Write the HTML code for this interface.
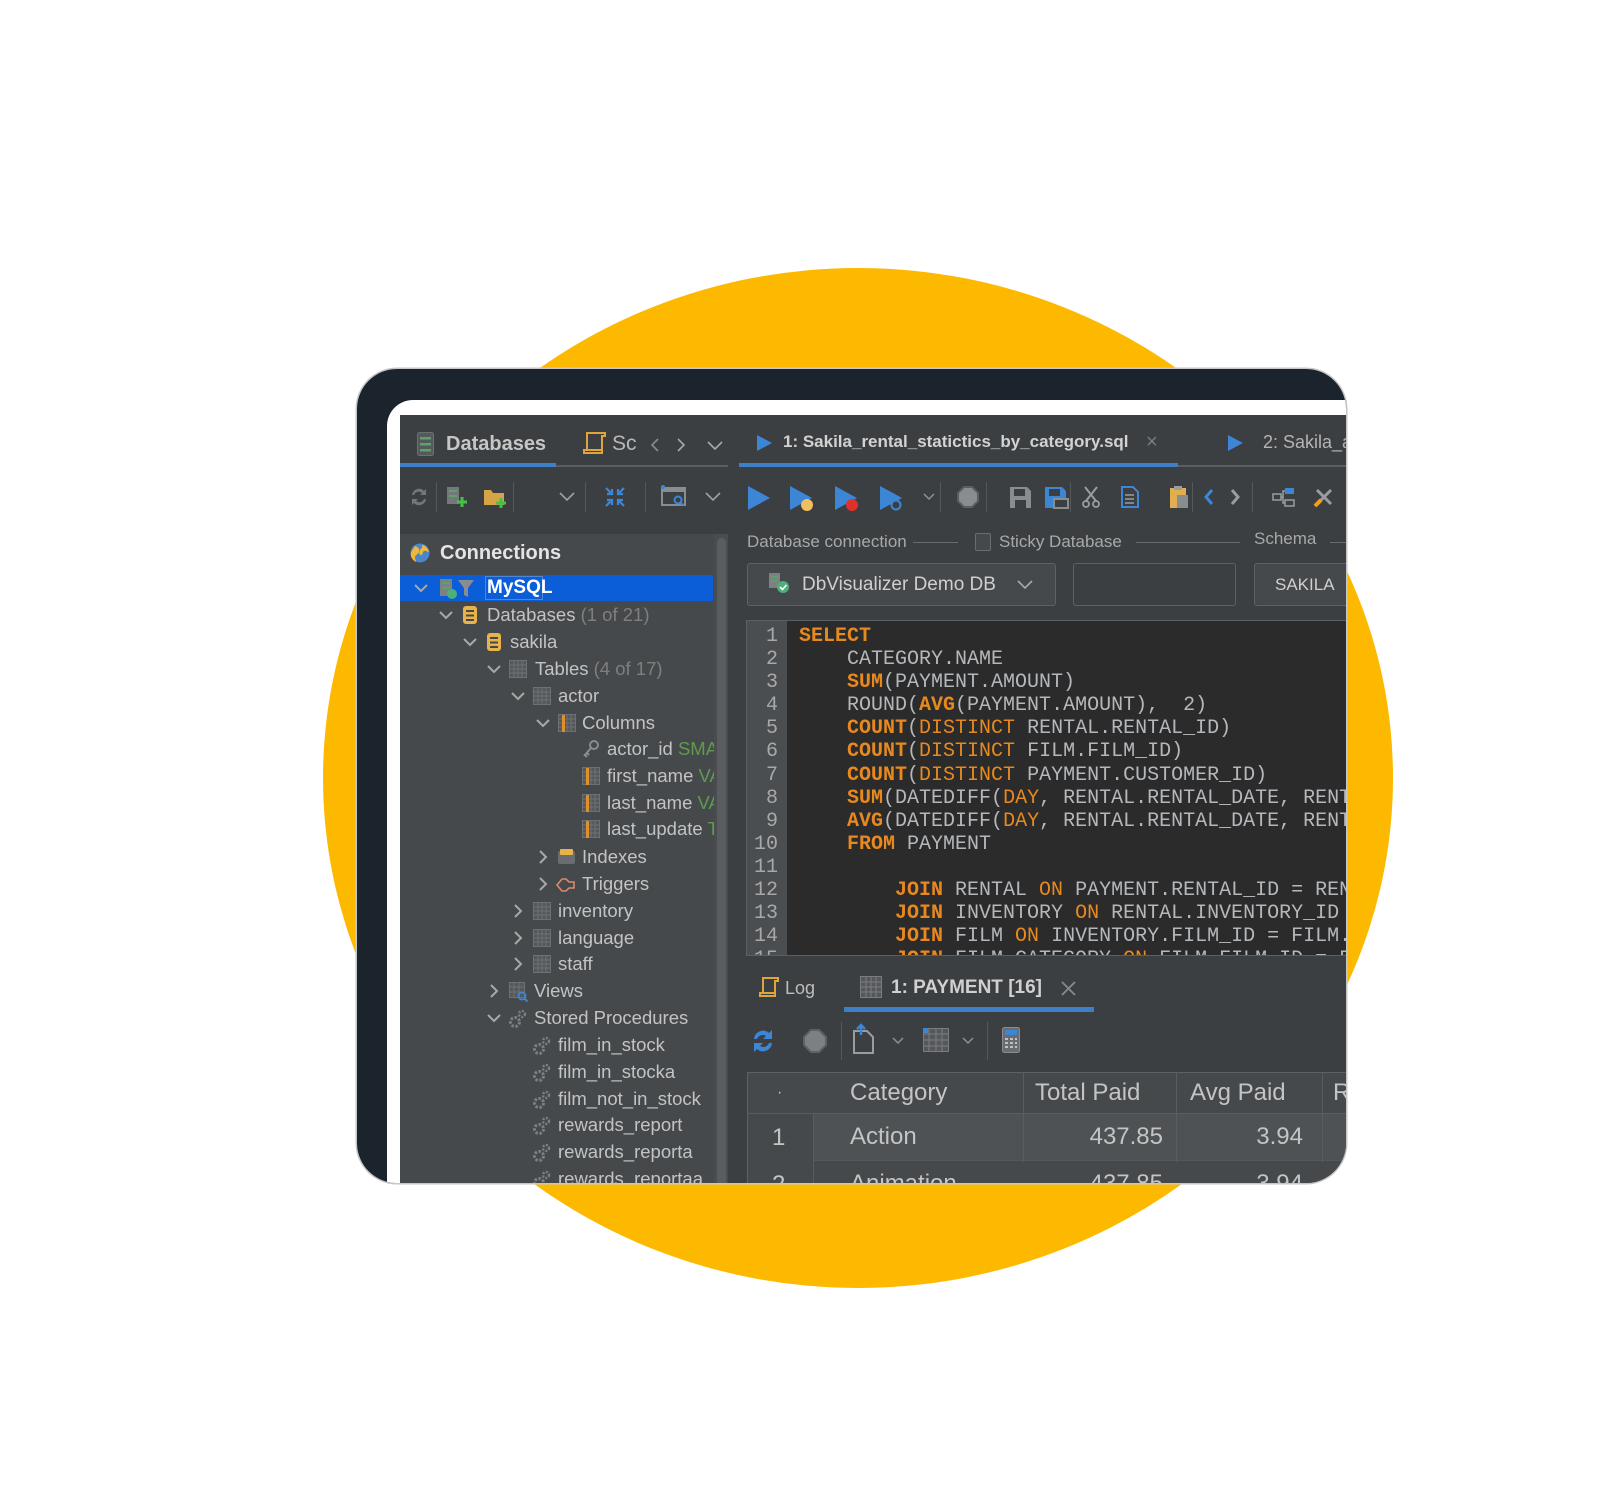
<!DOCTYPE html>
<html><head><meta charset="utf-8">
<style>
*{margin:0;padding:0;box-sizing:border-box}
html,body{width:1600px;height:1497px;background:#fff;overflow:hidden;font-family:"Liberation Sans",sans-serif}
.abs{position:absolute}
#circle{position:absolute;left:323px;top:268px;width:1070px;height:1020px;border-radius:50%;background:#FDB900}
#dev{position:absolute;left:357px;top:369px;width:989px;height:814px;border-radius:40px;overflow:hidden;background:#1b232d;box-shadow:0 0 0 1.5px #c6c6c6}
#inner{position:absolute;left:-357px;top:-369px;width:1600px;height:1497px}
.t{position:absolute;white-space:nowrap;color:#c3c3c3;font-size:18.5px;line-height:26px;height:26px}
.g{color:#7f7f7f}
.gr{color:#5f9a4f}
.code{position:absolute;left:799px;top:625px;font-family:"Liberation Mono",monospace;font-size:20px;line-height:23.1px;color:#b4b8bc;white-space:pre}
.k{color:#e8891f;font-weight:bold}
.o{color:#e8891f}
.ln{position:absolute;left:0;width:31px;top:4px;font-family:"Liberation Mono",monospace;font-size:20px;line-height:23.1px;color:#a8a8a8;text-align:right;white-space:pre}
svg{position:absolute;overflow:visible}
.th{position:absolute;font-size:24px;color:#c4c4c4;line-height:41px;white-space:nowrap}
.td{position:absolute;font-size:24px;color:#c4c4c4;line-height:47px;white-space:nowrap}
</style></head><body>
<div id="circle"></div>
<div id="dev"><div id="inner">
<div class="abs" style="left:387px;top:400px;width:1000px;height:900px;border-radius:26px;background:#fff"></div>
<div class="abs" style="left:400px;top:415px;width:1000px;height:800px;background:#3c3f41"></div>

<!-- left tabs -->
<svg style="left:417px;top:432px" width="17" height="24"><rect x="0.5" y="0.5" width="16" height="23" rx="2" fill="#55595b" stroke="#6c7072"/><rect x="3" y="5" width="11" height="2.5" fill="#5aa36a"/><rect x="3" y="11" width="11" height="2.5" fill="#5aa36a"/><rect x="3" y="17" width="11" height="2.5" fill="#5aa36a"/></svg>
<div class="t" style="left:446px;top:431px;font-size:20px;font-weight:bold;color:#c6c6c6">Databases</div>
<svg style="left:581px;top:431px" width="26" height="25"><path d="M6 2h18v3h-3v17H3v-3h3z M3 19h18" fill="none" stroke="#e0a53a" stroke-width="2"/></svg>
<div class="t" style="left:612px;top:431px;font-size:21px;color:#b8b8b8">Sc</div>
<svg style="left:650px;top:438px" width="10" height="14"><path d="M8 1L2 7l6 6" fill="none" stroke="#8a8a8a" stroke-width="1.6"/></svg>
<svg style="left:676px;top:438px" width="10" height="14"><path d="M2 1l6 6-6 6" fill="none" stroke="#a8a8a8" stroke-width="1.6"/></svg>
<svg style="left:707px;top:441px" width="16" height="10"><path d="M1 1l7 7 7-7" fill="none" stroke="#a8a8a8" stroke-width="1.6"/></svg>
<div class="abs" style="left:400px;top:463px;width:156px;height:4px;background:#3f7fc8"></div>
<div class="abs" style="left:556px;top:465px;width:172px;height:1.5px;background:#5b5e60"></div>

<!-- right tabs -->
<svg style="left:757px;top:435px" width="15" height="16"><path d="M0 0l15 8-15 8z" fill="#3d86d6"/></svg>
<div class="t" style="left:783px;top:429px;font-size:17px;font-weight:bold;color:#d2d2d2">1: Sakila_rental_statictics_by_category.sql</div>
<div class="t" style="left:1146px;top:429px;font-size:20px;color:#7c7c7c">×</div>
<svg style="left:1228px;top:435px" width="15" height="16"><path d="M0 0l15 8-15 8z" fill="#3d86d6"/></svg>
<div class="t" style="left:1263px;top:429px;font-size:18px;color:#b4b4b4">2: Sakila_actor</div>
<div class="abs" style="left:739px;top:463px;width:439px;height:4px;background:#3f7fc8"></div>
<div class="abs" style="left:1178px;top:465px;width:170px;height:1.5px;background:#5b5e60"></div>

<!-- left toolbar -->
<svg style="left:408px;top:486px" width="22" height="22"><path d="M4 9a7 7 0 0 1 12-4l2-2v6h-6l2-2a5 5 0 0 0-8 2z M18 13a7 7 0 0 1-12 4l-2 2v-6h6l-2 2a5 5 0 0 0 8-2z" fill="#74777a"/></svg>
<div class="abs" style="left:436px;top:482px;width:1px;height:30px;background:#55585a"></div>
<svg style="left:446px;top:486px" width="22" height="22"><rect x="1" y="1" width="12" height="17" fill="#74787a"/><rect x="3" y="4" width="8" height="2" fill="#5aa36a"/><rect x="3" y="9" width="8" height="2" fill="#5aa36a"/><path d="M16 11v10M11 16h10" stroke="#46c04a" stroke-width="3"/></svg>
<svg style="left:483px;top:487px" width="24" height="22"><path d="M1 3h7l2 3h11v12H1z" fill="#d6a444"/><path d="M18 11v10M13 16h10" stroke="#46c04a" stroke-width="3"/></svg>
<div class="abs" style="left:513px;top:482px;width:1px;height:30px;background:#55585a"></div>
<svg style="left:559px;top:492px" width="16" height="10"><path d="M1 1l7 7 7-7" fill="none" stroke="#a0a0a0" stroke-width="1.6"/></svg>
<div class="abs" style="left:585px;top:482px;width:1px;height:30px;background:#55585a"></div>
<svg style="left:604px;top:486px" width="22" height="22"><path d="M2 2l6 6M8 3v5H3 M20 2l-6 6M14 3v5h5 M2 20l6-6M8 19v-5H3 M20 20l-6-6M14 19v-5h5" fill="none" stroke="#3d86d6" stroke-width="2.2"/></svg>
<div class="abs" style="left:645px;top:482px;width:1px;height:30px;background:#55585a"></div>
<svg style="left:661px;top:485px" width="26" height="24"><rect x="1" y="3" width="23" height="17" fill="none" stroke="#8a8d90" stroke-width="2"/><rect x="1" y="3" width="23" height="4" fill="#8a8d90"/><circle cx="2" cy="2" r="2" fill="#3d86d6"/><circle cx="17" cy="15" r="3.5" fill="none" stroke="#3d86d6" stroke-width="2"/><path d="M19.5 17.5l3 3" stroke="#3d86d6" stroke-width="2"/></svg>
<svg style="left:705px;top:492px" width="16" height="10"><path d="M1 1l7 7 7-7" fill="none" stroke="#a0a0a0" stroke-width="1.6"/></svg>

<!-- right toolbar -->
<svg style="left:748px;top:486px" width="22" height="24"><path d="M0 0l22 12L0 24z" fill="#3d86d6"/></svg>
<svg style="left:790px;top:486px" width="24" height="26"><path d="M0 0l22 12L0 24z" fill="#3d86d6"/><circle cx="17" cy="19" r="6" fill="#f0c060"/></svg>
<svg style="left:835px;top:486px" width="24" height="26"><path d="M0 0l22 12L0 24z" fill="#3d86d6"/><circle cx="17" cy="19" r="6" fill="#e0302a"/></svg>
<svg style="left:880px;top:486px" width="24" height="26"><path d="M0 0l22 12L0 24z" fill="#3d86d6"/><circle cx="16" cy="19" r="4.5" fill="#3c3f41" stroke="#3d86d6" stroke-width="2"/></svg>
<svg style="left:923px;top:493px" width="12" height="8"><path d="M1 1l5 5 5-5" fill="none" stroke="#909090" stroke-width="1.5"/></svg>
<div class="abs" style="left:940px;top:482px;width:1px;height:30px;background:#55585a"></div>
<svg style="left:957px;top:486px" width="22" height="22"><path d="M7 1h8l6 6v8l-6 6H7l-6-6V7z" fill="#8a8d90" stroke="#5c5f61" stroke-width="2"/></svg>
<div class="abs" style="left:986px;top:482px;width:1px;height:30px;background:#55585a"></div>
<svg style="left:1010px;top:487px" width="21" height="21"><path d="M0 0h17l4 4v17H0z" fill="#8a8d90"/><rect x="4" y="2" width="11" height="7" fill="#3c3f41"/><rect x="5" y="13" width="11" height="8" fill="#3c3f41"/></svg>
<svg style="left:1045px;top:487px" width="24" height="22"><path d="M0 0h17l4 4v17H0z" fill="#3d86d6"/><rect x="4" y="2" width="11" height="7" fill="#3c3f41"/><rect x="9" y="12" width="14" height="9" fill="#3c3f41" stroke="#8a8d90" stroke-width="2"/></svg>
<div class="abs" style="left:1070px;top:482px;width:1px;height:30px;background:#55585a"></div>
<svg style="left:1082px;top:486px" width="18" height="22"><path d="M3 1l11 14M15 1L4 15" stroke="#9a9da0" stroke-width="2"/><circle cx="4" cy="18" r="3" fill="none" stroke="#9a9da0" stroke-width="1.8"/><circle cx="14" cy="18" r="3" fill="none" stroke="#9a9da0" stroke-width="1.8"/></svg>
<svg style="left:1121px;top:486px" width="20" height="22"><path d="M1 1h11l5 5v15H1z" fill="none" stroke="#3d86d6" stroke-width="2"/><path d="M4 9h9M4 13h9M4 17h9" stroke="#9a9da0" stroke-width="1.5"/></svg>
<svg style="left:1169px;top:485px" width="20" height="24"><rect x="1" y="3" width="16" height="20" fill="#e0b050"/><rect x="5" y="1" width="8" height="4" fill="#9a9da0"/><rect x="8" y="10" width="11" height="13" fill="#8a8d90"/></svg>
<div class="abs" style="left:1192px;top:482px;width:1px;height:30px;background:#55585a"></div>
<svg style="left:1204px;top:489px" width="10" height="16"><path d="M8 1L2 8l6 7" fill="none" stroke="#3d86d6" stroke-width="3"/></svg>
<svg style="left:1230px;top:489px" width="10" height="16"><path d="M2 1l6 7-6 7" fill="none" stroke="#9a9da0" stroke-width="3"/></svg>
<div class="abs" style="left:1252px;top:482px;width:1px;height:30px;background:#55585a"></div>
<svg style="left:1272px;top:487px" width="24" height="20"><rect x="1" y="7" width="8" height="6" fill="none" stroke="#9a9da0" stroke-width="1.5"/><rect x="13" y="1" width="9" height="6" fill="#3d86d6"/><rect x="13" y="13" width="9" height="6" fill="none" stroke="#9a9da0" stroke-width="1.5"/><path d="M9 10h2v-6h2M11 10v6h2" fill="none" stroke="#9a9da0" stroke-width="1.5"/></svg>
<svg style="left:1312px;top:485px" width="24" height="24"><path d="M3 21L19 5M5 5l14 14" stroke="#9a9da0" stroke-width="3"/><path d="M3 21l6-6" stroke="#f0a020" stroke-width="4"/></svg>

<!-- tree panel -->
<div class="abs" style="left:400px;top:534px;width:314px;height:700px;background:#46494b"></div>
<div class="abs" style="left:714px;top:534px;width:14px;height:700px;background:#4a4d4f"></div>
<div class="abs" style="left:717px;top:538px;width:9px;height:700px;border-radius:5px;background:#5a5d60"></div>

<svg style="left:410px;top:543px" width="20" height="20"><circle cx="10" cy="10" r="9.5" fill="#4a86c8"/><path d="M5 3c3 1 5 3 4 6s-4 2-4 6l1 4c-4-2-6-6-5-10zM12 2c3 0 6 3 7 7-2 0-3-2-5-1s-1 4-3 4-2-3-1-5 3-2 2-5z" fill="#f0b83a"/></svg>
<div class="t" style="left:440px;top:540px;font-size:20px;font-weight:bold;color:#e4e4e4">Connections</div>

<div class="abs" style="left:400px;top:575px;width:313px;height:26px;background:#0b5ed7"></div>
<div class="abs" style="left:485px;top:576px;width:58px;height:24px;border:1px solid #4f86d8"></div>

<div id="tree"></div>

<!-- right panel header -->
<div class="t" style="left:747px;top:529px;font-size:17px;color:#a8a8a8">Database connection</div>
<div class="abs" style="left:913px;top:542px;width:45px;height:1px;background:#686b6d"></div>
<div class="abs" style="left:975px;top:533px;width:16px;height:18px;border:1px solid #6a6d6f;border-radius:2px;background:#46494b"></div>
<div class="t" style="left:999px;top:529px;font-size:17px;color:#a8a8a8">Sticky Database</div>
<div class="abs" style="left:1136px;top:542px;width:104px;height:1px;background:#686b6d"></div>
<div class="t" style="left:1254px;top:526px;font-size:17px;color:#a8a8a8">Schema</div>
<div class="abs" style="left:1330px;top:542px;width:20px;height:1px;background:#686b6d"></div>

<div class="abs" style="left:747px;top:563px;width:309px;height:43px;border:1px solid #5e6163;border-radius:3px;background:#46494b"></div>
<svg style="left:769px;top:573px" width="22" height="22"><rect x="0" y="0" width="11" height="15" fill="#7d8184"/><rect x="2" y="3" width="7" height="1.5" fill="#5aa36a"/><rect x="2" y="7" width="7" height="1.5" fill="#5aa36a"/><circle cx="14" cy="14" r="6" fill="#4bb07a"/><path d="M11 14l2.5 2.5 4-4.5" fill="none" stroke="#fff" stroke-width="1.6"/></svg>
<div class="t" style="left:802px;top:572px;font-size:19px;color:#cfcfcf">DbVisualizer Demo DB</div>
<svg style="left:1017px;top:580px" width="16" height="10"><path d="M1 1l7 7 7-7" fill="none" stroke="#a8a8a8" stroke-width="1.6"/></svg>
<div class="abs" style="left:1073px;top:563px;width:163px;height:43px;border:1px solid #5e6163;border-radius:3px;background:#3c3f41"></div>
<div class="abs" style="left:1254px;top:563px;width:120px;height:43px;border:1px solid #5e6163;border-radius:3px;background:#46494b"></div>
<div class="t" style="left:1275px;top:572px;font-size:17px;color:#cfcfcf">SAKILA</div>

<!-- editor -->
<div class="abs" style="left:746px;top:620px;width:620px;height:336px;background:#2b2b2b;border:1px solid #5c5f61"></div>
<div class="abs" style="left:747px;top:621px;width:40px;height:334px;background:#4b4e50"></div>
<div class="abs" style="left:747px;top:621px;width:620px;height:334px;overflow:hidden">
<div class="ln">1
2
3
4
5
6
7
8
9
10
11
12
13
14
15</div>
<div class="code" style="left:52px;top:4px"><span class="k">SELECT</span>
    CATEGORY.NAME
    <span class="k">SUM</span>(PAYMENT.AMOUNT)
    ROUND(<span class="k">AVG</span>(PAYMENT.AMOUNT),  2)
    <span class="k">COUNT</span>(<span class="o">DISTINCT</span> RENTAL.RENTAL_ID)
    <span class="k">COUNT</span>(<span class="o">DISTINCT</span> FILM.FILM_ID)
    <span class="k">COUNT</span>(<span class="o">DISTINCT</span> PAYMENT.CUSTOMER_ID)
    <span class="k">SUM</span>(DATEDIFF(<span class="o">DAY</span>, RENTAL.RENTAL_DATE, RENTAL.RETURN_DATE))
    <span class="k">AVG</span>(DATEDIFF(<span class="o">DAY</span>, RENTAL.RENTAL_DATE, RENTAL.RETURN_DATE))
    <span class="k">FROM</span> PAYMENT

        <span class="k">JOIN</span> RENTAL <span class="o">ON</span> PAYMENT.RENTAL_ID = RENTAL.RENTAL_ID
        <span class="k">JOIN</span> INVENTORY <span class="o">ON</span> RENTAL.INVENTORY_ID = INVENTORY.INVENTORY_ID
        <span class="k">JOIN</span> FILM <span class="o">ON</span> INVENTORY.FILM_ID = FILM.FILM_ID
        <span class="k">JOIN</span> FILM_CATEGORY <span class="o">ON</span> FILM.FILM_ID = FILM_CATEGORY.FILM_ID</div>
</div>

<!-- bottom tabs -->
<svg style="left:758px;top:976px" width="22" height="24"><path d="M5 2h15v3h-3v15H2v-3h3z M2 17h15" fill="none" stroke="#e0a53a" stroke-width="2"/></svg>
<div class="t" style="left:785px;top:975px;font-size:18px;color:#bdbdbd">Log</div>
<svg style="left:860px;top:976px" width="22" height="22"><rect x="0.5" y="0.5" width="21" height="21" fill="#55585a" stroke="#7a7d80"/><path d="M0 6h22M0 11h22M0 16h22M6 0v22M11 0v22M16 0v22" stroke="#7a7d80" stroke-width="1"/></svg>
<div class="t" style="left:891px;top:975px;font-size:19px;font-weight:bold;color:#d0d0d0">1: PAYMENT [16]</div>
<svg style="left:1061px;top:981px" width="15" height="15"><path d="M1 1l13 13M14 1L1 14" stroke="#8a8a8a" stroke-width="1.8"/></svg>
<div class="abs" style="left:844px;top:1007px;width:250px;height:5px;background:#3f7fc8"></div>

<svg style="left:749px;top:1027px" width="28" height="28"><path d="M5 12a9 9 0 0 1 15-6l3-3v9h-9l3-3a6 6 0 0 0-9 3z M23 16a9 9 0 0 1-15 6l-3 3v-9h9l-3 3a6 6 0 0 0 9-3z" fill="#3d86d6"/></svg>
<svg style="left:803px;top:1029px" width="24" height="24"><path d="M8 1h8l7 7v8l-7 7H8l-7-7V8z" fill="#7d8083" stroke="#5f6264" stroke-width="2"/></svg>
<div class="abs" style="left:841px;top:1022px;width:1px;height:38px;background:#55585a"></div>
<svg style="left:853px;top:1024px" width="22" height="30"><path d="M1 7h13l6 6v16H1z" fill="none" stroke="#9a9da0" stroke-width="2"/><path d="M8 11V1M4 5l4-4 4 4" fill="none" stroke="#3d86d6" stroke-width="2.5"/></svg>
<svg style="left:892px;top:1037px" width="12" height="8"><path d="M1 1l5 5 5-5" fill="none" stroke="#909090" stroke-width="1.5"/></svg>
<svg style="left:923px;top:1028px" width="26" height="24"><rect x="0.5" y="0.5" width="25" height="23" fill="#55585a" stroke="#7a7d80"/><path d="M0 6h26M0 12h26M0 18h26M6 0v24M13 0v24M19 0v24" stroke="#7a7d80"/><rect x="0" y="0" width="5" height="5" fill="#3d86d6"/></svg>
<svg style="left:962px;top:1037px" width="12" height="8"><path d="M1 1l5 5 5-5" fill="none" stroke="#909090" stroke-width="1.5"/></svg>
<div class="abs" style="left:987px;top:1022px;width:1px;height:38px;background:#55585a"></div>
<svg style="left:1002px;top:1027px" width="18" height="26"><rect x="0.5" y="0.5" width="17" height="25" rx="2" fill="#6a6d70" stroke="#8a8d90"/><rect x="3" y="3" width="12" height="5" fill="#3d86d6"/><path d="M3 12h3M8 12h3M13 12h2M3 16h3M8 16h3M13 16h2M3 20h3M8 20h3M13 20h2" stroke="#c0c0c0" stroke-width="2"/></svg>

<!-- table -->
<div class="abs" style="left:747px;top:1072px;width:620px;height:120px;background:#46494b;border-top:1px solid #5e6163;border-left:1px solid #5e6163"></div>
<div class="abs" style="left:813px;top:1113px;width:560px;height:47px;background:#4e5254"></div>
<div class="abs" style="left:747px;top:1113px;width:620px;height:1px;background:#5a5d60"></div>
<div class="abs" style="left:813px;top:1160px;width:560px;height:1px;background:#55585a"></div>
<div class="abs" style="left:813px;top:1113px;width:1px;height:80px;background:#5a5d60"></div>
<div class="abs" style="left:1023px;top:1072px;width:1px;height:90px;background:#5a5d60"></div>
<div class="abs" style="left:1176px;top:1072px;width:1px;height:90px;background:#5a5d60"></div>
<div class="abs" style="left:1322px;top:1072px;width:1px;height:90px;background:#5a5d60"></div>
<div class="th" style="left:777px;top:1072px;font-size:16px">·</div>
<div class="th" style="left:850px;top:1072px">Category</div>
<div class="th" style="left:1035px;top:1072px">Total Paid</div>
<div class="th" style="left:1190px;top:1072px">Avg Paid</div>
<div class="th" style="left:1333px;top:1072px">R</div>
<div class="td" style="left:772px;top:1114px">1</div>
<div class="td" style="left:850px;top:1113px">Action</div>
<div class="td" style="left:1023px;top:1113px;width:140px;text-align:right">437.85</div>
<div class="td" style="left:1176px;top:1113px;width:127px;text-align:right">3.94</div>
<div class="td" style="left:772px;top:1161px">2</div>
<div class="td" style="left:850px;top:1160px">Animation</div>
<div class="td" style="left:1023px;top:1160px;width:140px;text-align:right">437.85</div>
<div class="td" style="left:1176px;top:1160px;width:127px;text-align:right">3.94</div>

</div></div>

<script>
(function(){
var T=document.getElementById('tree');var h='';
function chev(x,y,open){return open?'<svg style="left:'+(x-6)+'px;top:'+(y-4)+'px" width="14" height="9"><path d="M1 1l6 6 6-6" fill="none" stroke="#a8a8a8" stroke-width="2"/></svg>':'<svg style="left:'+(x-3)+'px;top:'+(y-7)+'px" width="9" height="14"><path d="M1 1l6 6-6 6" fill="none" stroke="#a8a8a8" stroke-width="2"/></svg>';}
function icon(type,x,y){
 var s='<svg style="left:'+x+'px;top:'+(y-9)+'px" width="20" height="20">';
 if(type=='db')s+='<rect x="1" y="0" width="14" height="18" rx="3" fill="#e8b44a"/><rect x="4" y="4" width="8" height="2" fill="#46494b"/><rect x="4" y="8.5" width="8" height="2" fill="#46494b"/><rect x="4" y="13" width="8" height="2" fill="#46494b"/>';
 else if(type=='tbl')s+='<rect x="0.5" y="0.5" width="17" height="17" fill="#55585a" stroke="#6e7174"/><path d="M0 5h18M0 9h18M0 13h18M5 0v18M9 0v18M13 0v18" stroke="#6e7174"/>';
 else if(type=='col')s+='<rect x="0.5" y="0.5" width="17" height="17" fill="#55585a" stroke="#6e7174"/><path d="M0 5h18M0 9h18M0 13h18M9 0v18M13 0v18" stroke="#6e7174"/><rect x="4" y="1" width="3" height="17" fill="#e0902a"/>';
 else if(type=='key')s+='<circle cx="12" cy="5" r="4" fill="none" stroke="#8a8d90" stroke-width="2"/><path d="M9 8l-7 8M5 13l2 2M3 15l2 2" stroke="#8a8d90" stroke-width="2"/>';
 else if(type=='idx')s+='<rect x="1" y="3" width="17" height="13" rx="2" fill="#6a6d70"/><rect x="3" y="1" width="13" height="6" rx="1" fill="#e8b44a"/>';
 else if(type=='trg')s+='<path d="M2 10l5-6h4l3 3h5v6h-5l-3 3H7z" fill="none" stroke="#d98a6a" stroke-width="1.6"/>';
 else if(type=='view')s+='<rect x="0.5" y="0.5" width="15" height="15" fill="#55585a" stroke="#6e7174"/><path d="M0 5h16M0 10h16M5 0v16M10 0v16" stroke="#6e7174"/><circle cx="13" cy="14" r="3.5" fill="none" stroke="#3d86d6" stroke-width="1.8"/><path d="M15.5 16.5l3 3" stroke="#3d86d6" stroke-width="2"/>';
 else if(type=='gear')s+='<circle cx="7" cy="13" r="4.5" fill="none" stroke="#7d8083" stroke-width="3" stroke-dasharray="2.5 1.6"/><circle cx="14" cy="5" r="3" fill="none" stroke="#7d8083" stroke-width="2.4" stroke-dasharray="2 1.4"/>';
 else if(type=='mysql')s='<svg style="left:'+x+'px;top:'+(y-10)+'px" width="36" height="22"><rect x="0" y="1" width="12" height="17" fill="#7d8184"/><rect x="2" y="4" width="8" height="2" fill="#5aa36a"/><rect x="2" y="9" width="8" height="2" fill="#5aa36a"/><circle cx="12" cy="16" r="5" fill="#4bb07a"/><path d="M18 2h16l-6 8v9l-4-2v-7z" fill="#8a8d90"/>';
 return s+'</svg>';}
function row(y,cx,open,ic,ix,tx,txt,extra,ec){
 if(cx)h+=chev(cx,y,open);
 if(ic)h+=icon(ic,ix,y);
 h+='<div class="t" style="left:'+tx+'px;top:'+(y-13)+'px">'+txt+(extra?' <span class="'+(ec||'g')+'"> '+extra+'</span>':'')+'</div>';}
h+=chev(420,588,true)+icon('mysql',440,588);
h+='<div class="t" style="left:487px;top:575px;font-weight:bold;color:#fff;font-size:19px">MySQL</div>';
row(615,445,1,'db',462,487,'Databases','(1 of 21)');
row(642,469,1,'db',486,510,'sakila');
row(669,493,1,'tbl',509,535,'Tables','(4 of 17)');
row(696,517,1,'tbl',533,558,'actor');
row(723,542,1,'col',558,582,'Columns');
row(749,0,0,'key',582,607,'actor_id','SMALLINT','gr');
row(776,0,0,'col',582,607,'first_name','VARCHAR','gr');
row(803,0,0,'col',582,607,'last_name','VARCHAR','gr');
row(829,0,0,'col',582,607,'last_update','TIMESTAMP','gr');
row(857,542,0,'idx',557,582,'Indexes');
row(884,542,0,'trg',555,582,'Triggers');
row(911,517,0,'tbl',533,558,'inventory');
row(938,517,0,'tbl',533,558,'language');
row(964,517,0,'tbl',533,558,'staff');
row(991,493,0,'view',509,534,'Views');
row(1018,493,1,'gear',508,534,'Stored Procedures');
var sp=['film_in_stock','film_in_stocka','film_not_in_stock','rewards_report','rewards_reporta','rewards_reportaa'];
for(var i=0;i<sp.length;i++)row(1045+i*26.8,0,0,'gear',532,558,sp[i]);
var wrap='<div class="abs" style="left:400px;top:534px;width:314px;height:700px;overflow:hidden"><div class="abs" style="left:-400px;top:-534px;width:1600px;height:1497px">'+h+'</div></div>';
T.outerHTML=wrap;
})();
</script>
</body></html>
